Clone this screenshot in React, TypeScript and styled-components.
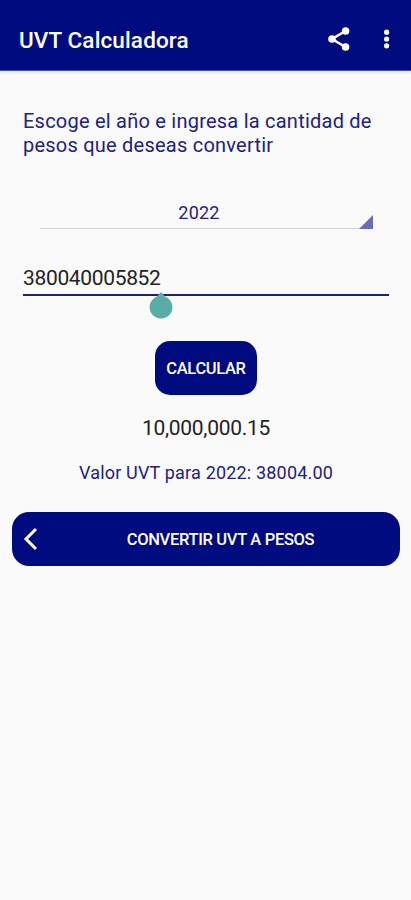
import React from "react";
import styled, { createGlobalStyle } from "styled-components";

const NAVY = "#000b80";

const GlobalStyle = createGlobalStyle`
  * { box-sizing: border-box; }
  body { margin: 0; background: #fafafa; font-family: Roboto, sans-serif; }
`;

const Screen = styled.div`
  width: 411px;
  height: 900px;
  display: flex;
  flex-direction: column;
  background: #fafafa;
  overflow: hidden;
`;

const AppBar = styled.header`
  height: 71px;
  flex: none;
  display: flex;
  align-items: center;
  padding: 9px 9px 0 19px;
  background: ${NAVY};
  color: #fff;
  border-bottom: 1px solid #4a4fa0;
  box-shadow: 0 1px 3px rgba(60, 40, 90, 0.16);
`;

const Title = styled.h1`
  flex: 1;
  margin: 0;
  font-size: 22.5px;
  line-height: 28px;
  font-weight: 500;
  letter-spacing: 0.13px;
  white-space: nowrap;
`;

const IconButton = styled.button<{ $width: number }>`
  width: ${(p) => p.$width}px;
  height: 28px;
  padding: 0;
  border: 0;
  background: none;
  color: inherit;
  display: flex;
  align-items: center;
  justify-content: center;
`;

const Actions = styled.div`
  display: flex;
  align-items: center;
  gap: 8px;
  margin-top: -1px;
`;

const Content = styled.main`
  display: flex;
  flex-direction: column;
  padding: 38px 11px 0 12px;
`;

const Prompt = styled.p`
  margin: 0 0 0 11px;
  color: #21217f;
  font-size: 20px;
  line-height: 24px;
  letter-spacing: 0.23px;
  white-space: nowrap;
`;

const YearSelect = styled.div`
  margin: 44px 28px 0 28px;
  height: 28px;
  position: relative;
  border-bottom: 1px solid #d0d0d2;
  color: #21217f;
  font-size: 18px;
  line-height: 24px;
  letter-spacing: 0.2px;
  text-align: center;
  padding-right: 14px;
`;

const Corner = styled.svg`
  position: absolute;
  right: -1px;
  bottom: -1px;
`;

const Field = styled.div`
  position: relative;
  margin: 34px 11px 0 11px;
  height: 33px;
  border-bottom: 2px solid #1f2272;
  color: #222;
  font-size: 21px;
  line-height: 31px;
  letter-spacing: -0.34px;
`;

const Handle = styled.svg`
  position: absolute;
  left: 126px;
  top: 28px;
`;

const Button = styled.button`
  border: 0;
  height: 54px;
  background: ${NAVY};
  color: #fff;
  font-family: inherit;
  font-weight: 500;
  white-space: nowrap;
`;

const CalculateButton = styled(Button)`
  align-self: center;
  width: 102px;
  margin-top: 45px;
  padding: 1px 0 0;
  border-radius: 15px;
  font-size: 16.5px;
  letter-spacing: -0.35px;
`;

const Result = styled.output`
  margin-top: 20px;
  color: #222;
  font-size: 21px;
  line-height: 26px;
  letter-spacing: -0.3px;
  text-align: center;
`;

const Rate = styled.p`
  margin: 20px 0 0;
  color: #21217f;
  font-size: 18px;
  line-height: 24px;
  letter-spacing: 0.18px;
  text-align: center;
`;

const SwitchButton = styled(Button)`
  display: flex;
  align-items: center;
  margin-top: 27px;
  padding: 0 11px;
  border-radius: 17px;
  font-size: 16.5px;
  letter-spacing: -0.32px;
`;

const SwitchLabel = styled.span`
  flex: 1;
  padding-left: 13px;
  text-align: center;
`;

export default function App() {
  return (
    <Screen>
      <GlobalStyle />
      <AppBar>
        <Title>UVT Calculadora</Title>
        <Actions>
          <IconButton $width={48} aria-label="Compartir">
            <svg width="24" height="26" viewBox="0 0 24 26">
              <path d="M18.5 5 5 13l13.5 8" fill="none" stroke="#fff" strokeWidth="2.6" />
              <circle cx="18.6" cy="5" r="3.8" fill="#fff" />
              <circle cx="5" cy="13" r="3.8" fill="#fff" />
              <circle cx="18.6" cy="21" r="3.8" fill="#fff" />
            </svg>
          </IconButton>
          <IconButton $width={31} aria-label="Más opciones">
            <svg width="8" height="24" viewBox="0 0 8 24">
              <circle cx="3.6" cy="5.2" r="2.6" fill="#fff" />
              <circle cx="3.6" cy="12" r="2.6" fill="#fff" />
              <circle cx="3.6" cy="18.8" r="2.6" fill="#fff" />
            </svg>
          </IconButton>
        </Actions>
      </AppBar>
      <Content>
        <Prompt>
          Escoge el año e ingresa la cantidad de
          <br />
          pesos que deseas convertir
        </Prompt>
        <YearSelect>
          2022
          <Corner width="14" height="14" viewBox="0 0 14 14">
            <path d="M14 0v14H0z" fill="#6a6bb2" />
          </Corner>
        </YearSelect>
        <Field>
          380040005852
          <Handle width="24" height="28" viewBox="0 0 24 28">
            <path d="M12 1 16 5.5A11.4 11.4 0 1 1 8 5.5z" fill="#58aea5" />
          </Handle>
        </Field>
        <CalculateButton>CALCULAR</CalculateButton>
        <Result>10,000,000.15</Result>
        <Rate>Valor UVT para 2022: 38004.00</Rate>
        <SwitchButton>
          <svg width="16" height="26" viewBox="0 0 16 26">
            <path d="M13 3 3 13l10 10" fill="none" stroke="#fff" strokeWidth="3" />
          </svg>
          <SwitchLabel>CONVERTIR UVT A PESOS</SwitchLabel>
        </SwitchButton>
      </Content>
    </Screen>
  );
}
